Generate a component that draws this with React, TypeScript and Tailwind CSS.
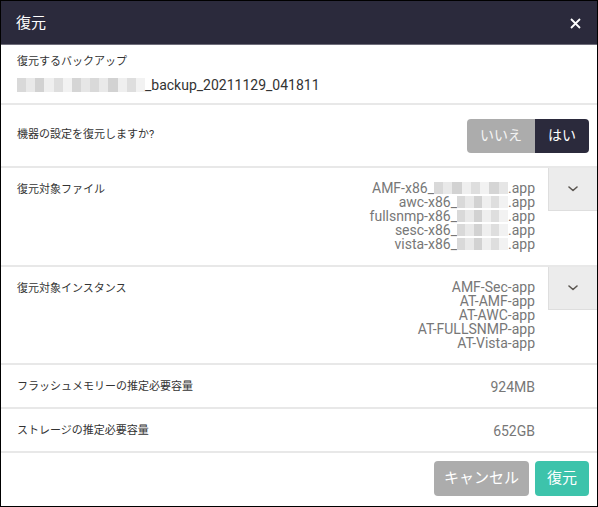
import { ReactNode } from "react";

const FONT = "font-['Roboto','Noto_Sans_CJK_JP',sans-serif]";

const SHADES = ["#d9d9d9", "#e9e9e9", "#d2d2d2", "#efefef", "#dedede", "#f2f2f2", "#d5d5d5", "#e6e6e6"];

function Blur({ width, height = 13 }: { width: number; height?: number }) {
  const count = Math.max(3, Math.round(width / 9));
  return (
    <span className="inline-flex align-middle" style={{ width, height }}>
      {Array.from({ length: count }).map((_, i) => (
        <span key={i} className="flex-1 h-full" style={{ background: SHADES[i % SHADES.length] }} />
      ))}
    </span>
  );
}

const FILES: { prefix: string; blur: number }[] = [
  { prefix: "AMF-x86_", blur: 74 },
  { prefix: "awc-x86_", blur: 51 },
  { prefix: "fullsnmp-x86_", blur: 51 },
  { prefix: "sesc-x86_", blur: 51 },
  { prefix: "vista-x86_", blur: 51 },
];

const INSTANCES = ["AMF-Sec-app", "AT-AMF-app", "AT-AWC-app", "AT-FULLSNMP-app", "AT-Vista-app"];

function Chevron() {
  return (
    <svg width="10" height="6" viewBox="0 0 10 6" fill="none">
      <path d="M1 1l4 3.5L9 1" stroke="#5a5550" strokeWidth="1.6" strokeLinecap="round" strokeLinejoin="round" />
    </svg>
  );
}

function ListRow({ label, children, height }: { label: string; children: ReactNode; height: string }) {
  return (
    <div className={`flex ${height} border-b-2 border-[#e8e8e8]`}>
      <p className="flex-1 pl-[16px] pt-[14px] text-[11px] leading-[16px] text-[#333]">{label}</p>
      <div className="pt-[13px] pr-[13px] text-right text-[14px] leading-[14px] text-[#777]">
        {children}
      </div>
      <div className="w-[49px] h-[43px] bg-[#ececec] border-l border-b border-[#dedede] flex items-center justify-center">
        <Chevron />
      </div>
    </div>
  );
}

function SizeRow({ label, value }: { label: string; value: string }) {
  return (
    <div className="flex items-center h-[44px] border-b-2 border-[#e8e8e8] pl-[16px] pr-[62px] pt-[2px]">
      <p className="flex-1 text-[11px] text-[#333]">{label}</p>
      <span className="text-[14px] text-[#777]">{value}</span>
    </div>
  );
}

export default function App() {
  return (
    <div className={`w-[598px] h-[507px] border border-black bg-white flex flex-col ${FONT}`}>
      <header className="h-[44px] shrink-0 bg-[#2b2a3c] border-b border-[#6e6d7a] flex items-center justify-between pl-[15px] pr-[16px] pt-[1px]">
        <h1 className="text-[15px] text-white">復元</h1>
        <svg width="11" height="11" viewBox="0 0 11 11">
          <path d="M1 1l9 9M10 1l-9 9" stroke="#fff" strokeWidth="1.8" />
        </svg>
      </header>

      <div className="h-[60px] shrink-0 border-b-2 border-[#e8e8e8] pl-[16px] pt-[9px]">
        <p className="text-[11px] leading-[16px] text-[#333]">復元するバックアップ</p>
        <p className="mt-[5px] text-[14px] leading-[20px] text-[#333] flex items-center">
          <Blur width={128} height={14} />
          <span>_backup_20211129_041811</span>
        </p>
      </div>

      <div className="h-[63px] shrink-0 flex items-center border-b-2 border-[#e8e8e8] pl-[16px] pr-[8px]">
        <p className="flex-1 text-[11px] text-[#333]">機器の設定を復元しますか?</p>
        <div className="flex h-[34px] rounded-[4px] overflow-hidden text-[14px] text-white">
          <button className="w-[68px] bg-[#acacac] text-[#f4f4f4]">いいえ</button>
          <button className="w-[54px] bg-[#2b2a3c]">はい</button>
        </div>
      </div>

      <ListRow label="復元対象ファイル" height="h-[99px]">
        {FILES.map((f) => (
          <div key={f.prefix} className="flex items-center justify-end h-[14px]">
            <span>{f.prefix}</span>
            <Blur width={f.blur} height={12} />
            <span>.app</span>
          </div>
        ))}
      </ListRow>

      <ListRow label="復元対象インスタンス" height="h-[98px]">
        {INSTANCES.map((name) => (
          <div key={name}>{name}</div>
        ))}
      </ListRow>

      <SizeRow label="フラッシュメモリーの推定必要容量" value="924MB" />
      <SizeRow label="ストレージの推定必要容量" value="652GB" />

      <footer className="flex-1 flex justify-end items-start gap-[6px] pt-[8px] pr-[8px]">
        <button className="w-[95px] h-[35px] rounded-[4px] bg-[#acacac] text-white text-[15px]">キャンセル</button>
        <button className="w-[54px] h-[35px] rounded-[4px] bg-[#3dc3ab] text-white text-[15px]">復元</button>
      </footer>
    </div>
  );
}
